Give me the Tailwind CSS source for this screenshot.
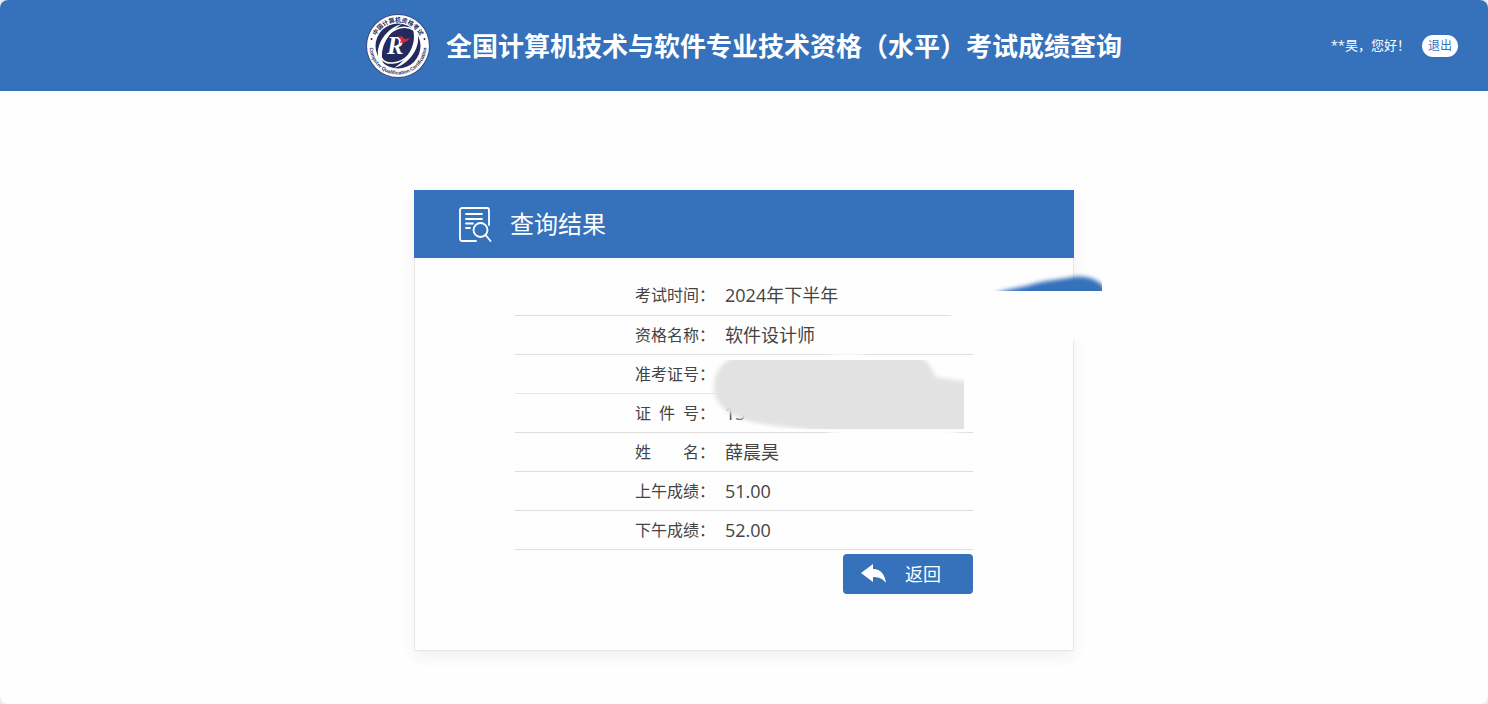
<!DOCTYPE html>
<html lang="zh-CN">
<head>
    <meta charset="UTF-8">
    <meta name="viewport" content="width=device-width, initial-scale=1.0">
    <title>全国计算机技术与软件专业技术资格（水平）考试成绩查询</title>
    <script src="https://cdn.jsdelivr.net/npm/@tailwindcss/browser@4"></script>
</head>
<body class="bg-[#ececec] font-['Open_Sans','Noto_Sans_CJK_SC',sans-serif] text-[#444]">
    <div class="min-h-screen bg-[#fefefe] rounded-lg overflow-hidden">
        <header class="grid grid-cols-[1fr_auto_1fr] items-center h-[91px] px-[30px] bg-[#3572bb] text-white">
            <div></div>
            <div class="flex items-center gap-4">
                <svg class="size-16" viewBox="0 0 64 64" role="img" aria-label="中国计算机资格考试">
                    <defs>
                        <path id="ringTop" d="M8 32a24 24 0 0 1 48 0"/>
                        <path id="ringBottom" d="M3.500 32a28.500 28.500 0 0 0 57 0"/>
                    </defs>
                    <circle cx="32" cy="32" r="32" fill="#3b4a80"/>
                    <circle cx="32" cy="32" r="31" fill="#fff"/>
                    <circle cx="32" cy="32" r="22.500" fill="#232a5e"/>
                    <path d="M48 16C36 9 21 17 16 30c-5 13 1 20 11 19 12-1 22-12 23-23" fill="none" stroke="#fff" stroke-width="1.500"/>
                    <path d="M36 10C20 14 8 32 13 46c1 3 3 4 5 5-6-14 2-31 18-41z" fill="#fff"/>
                    <path d="M28 54c16-4 28-22 23-36-1-3-3-4-5-5 6 14-2 31-18 41z" fill="#fff"/>
                    <text x="21" y="40" fill="#fff" font-size="25" font-weight="700" font-style="italic" font-family="Liberation Serif">R</text>
                    <path d="M31 22l4 1-1-2 5 4 5-1-4 4-6 1 1-3z" fill="#dc2830"/>
                    <g fill="#232a5e" font-weight="700">
                        <text font-size="6" text-anchor="middle" font-family="Noto Sans CJK SC"><textPath href="#ringTop" startOffset="50%">中国计算机资格考试</textPath></text>
                        <text font-size="5" text-anchor="middle" font-family="Liberation Sans"><textPath href="#ringBottom" startOffset="50%">Computer Qualification Certification</textPath></text>
                    </g>
                    <circle cx="5.500" cy="25" r="1" fill="#232a5e"/>
                    <circle cx="58.500" cy="25" r="1" fill="#232a5e"/>
                </svg>
                <h1 class="text-[26px] leading-10 font-bold">全国计算机技术与软件专业技术资格（水平）考试成绩查询</h1>
            </div>
            <div class="flex items-center justify-end gap-3 text-[13px]">
                <span>**昊，您好！</span>
                <button type="button" class="w-9 h-[22px] rounded-full bg-white text-[#3572bb] text-xs cursor-pointer">退出</button>
            </div>
        </header>

        <main class="relative w-full max-w-[660px] mx-auto mt-[99px] shadow-[0_6px_14px_rgba(0,0,0,0.06)]">
            <div class="flex items-center gap-[15px] h-[68px] pl-[45px] bg-[#3572bb] text-white">
                <svg class="w-9 h-9" viewBox="0 0 36 36" fill="none" stroke="currentColor" stroke-width="1.800" stroke-linecap="round" stroke-linejoin="round">
                    <path d="M17 35H3a2 2 0 0 1-2-2V4a2 2 0 0 1 2-2h25a2 2 0 0 1 2 2v15"/>
                    <path d="M7 8h16M7 13h16M7 17.500h7M7 22h4"/>
                    <circle cx="21.500" cy="24" r="7"/>
                    <path d="M26.500 29l5 6"/>
                </svg>
                <h2 class="text-2xl">查询结果</h2>
            </div>

            <div class="px-[100px] pt-[18px] pb-14 bg-[#fefefe] border border-t-0 border-[#e6e6e6]">
                <table class="w-full table-fixed">
                    <tbody>
                        <tr class="h-[39px] border-b border-[#dedede]">
                            <th scope="row" class="w-[200px] p-0 text-base font-normal"><div class="flex justify-end"><span>考试时间</span><span>：</span></div></th>
                            <td class="py-0 pl-[10px] text-lg">2024年下半年</td>
                        </tr>
                        <tr class="h-[39px] border-b border-[#dedede]">
                            <th scope="row" class="p-0 text-base font-normal"><div class="flex justify-end"><span>资格名称</span><span>：</span></div></th>
                            <td class="py-0 pl-[10px] text-lg">软件设计师</td>
                        </tr>
                        <tr class="h-[39px] border-b border-[#e6e6e6]">
                            <th scope="row" class="p-0 text-base font-normal"><div class="flex justify-end"><span>准考证号</span><span>：</span></div></th>
                            <td class="py-0 pl-[10px] text-lg"></td>
                        </tr>
                        <tr class="h-[39px] border-b border-[#dedede]">
                            <th scope="row" class="p-0 text-base font-normal"><div class="flex justify-end"><span class="flex justify-between w-16"><span>证</span><span>件</span><span>号</span></span><span>：</span></div></th>
                            <td class="py-0 pl-[10px] text-lg">13</td>
                        </tr>
                        <tr class="h-[39px] border-b border-[#dedede]">
                            <th scope="row" class="p-0 text-base font-normal"><div class="flex justify-end"><span class="flex justify-between w-16"><span>姓</span><span>名</span></span><span>：</span></div></th>
                            <td class="py-0 pl-[10px] text-lg">薛晨昊</td>
                        </tr>
                        <tr class="h-[39px] border-b border-[#dedede]">
                            <th scope="row" class="p-0 text-base font-normal"><div class="flex justify-end"><span>上午成绩</span><span>：</span></div></th>
                            <td class="py-0 pl-[10px] text-lg">51.00</td>
                        </tr>
                        <tr class="h-[39px] border-b border-[#dedede]">
                            <th scope="row" class="p-0 text-base font-normal"><div class="flex justify-end"><span>下午成绩</span><span>：</span></div></th>
                            <td class="py-0 pl-[10px] text-lg">52.00</td>
                        </tr>
                    </tbody>
                </table>
                <div class="flex justify-end mt-1">
                    <button type="button" class="flex items-center gap-[18px] w-[130px] h-10 pl-[18px] rounded bg-[#3572bb] text-white text-lg cursor-pointer">
                        <svg class="w-[26px] h-5" viewBox="0 0 26 20" fill="currentColor">
                            <path d="M0 9L12 0v5c8 0 12 6 13 14-3-4-7-6-13-6v5z"/>
                        </svg>
                        返回
                    </button>
                </div>
            </div>

            <!-- brush strokes that hide the personal numbers -->
            <svg class="absolute top-0 left-0 w-[660px] h-[460px] overflow-visible pointer-events-none" viewBox="0 0 660 460" aria-hidden="true">
                <defs>
                    <filter id="soft" x="-20%" y="-50%" width="140%" height="200%"><feGaussianBlur stdDeviation="2"/></filter>
                    <filter id="softer" x="-50%" y="-100%" width="200%" height="300%"><feGaussianBlur stdDeviation="5"/></filter>
                    <clipPath id="blueClip"><path d="M540 70h148v31H540z"/></clipPath>
                    <clipPath id="greyClip"><path d="M280 170h270v69H280z"/></clipPath>
                </defs>
                <g fill="#fefefe">
                    <path d="M537 112h140v38H537z" filter="url(#soft)"/>
                    <path d="M640 101h40v48h-40z"/>
                    <ellipse cx="432" cy="165" rx="18" ry="6" filter="url(#softer)"/>
                    <path d="M548 190h14v30h-14z" filter="url(#soft)"/>
                    <ellipse cx="480" cy="241" rx="66" ry="14" filter="url(#softer)"/>
                </g>
                <g clip-path="url(#blueClip)">
                    <path d="M582 103c15-5 25-5 37-9 14-4 25-4 40-7 12-2 26 2 33 12v16H582z" fill="#3572bb" filter="url(#soft)"/>
                </g>
                <g clip-path="url(#greyClip)">
                    <path d="M325 166H506c8 4 11 12 16 21 10 2 20 2 40 7v58H430c-15-14-50-12-80-18-32-4-50-18-50-37 0-14 8-28 25-31z" fill="#e2e2e2" filter="url(#soft)"/>
                </g>
            </svg>
        </main>
    </div>
</body>
</html>
